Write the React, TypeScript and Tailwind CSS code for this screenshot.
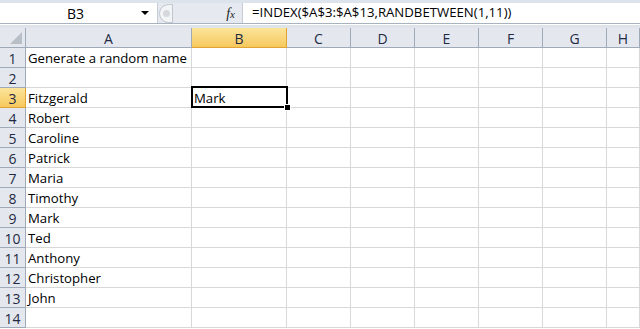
const cols = ["A", "B", "C", "D", "E", "F", "G", "H"];
const names = [
  "Fitzgerald",
  "Robert",
  "Caroline",
  "Patrick",
  "Maria",
  "Timothy",
  "Mark",
  "Ted",
  "Anthony",
  "Christopher",
  "John",
];

const cellValue = (row: number, col: number): string => {
  if (col === 0 && row === 1) return "Generate a random name";
  if (col === 0 && row >= 3 && row <= 13) return names[row - 3];
  if (col === 1 && row === 3) return "Mark";
  return "";
};

export default function App() {
  const rows = [];
  for (let i = 1; i <= 14; i++) {
    rows.push(i);
  }

  return (
    <div
      className="w-[640px] h-[329px] overflow-hidden bg-white text-[13.2px] text-black"
      style={{ fontFamily: '"Open Sans", "Liberation Sans", sans-serif' }}
    >
      <div className="h-[3px] bg-[#dde3ea]" />
      {/* formula bar */}
      <div className="h-[21px] flex border-b border-[#a9b3bf]">
        <div className="w-[158px] flex items-center bg-white border-r border-[#c5ccd5]">
          <div className="flex-1 text-center pl-[10px] text-[14px]">B3</div>
          <div className="mr-[8px] w-0 h-0 border-l-[4px] border-r-[4px] border-t-[4px] border-l-transparent border-r-transparent border-t-black" />
        </div>
        <div className="w-[85px] flex items-center bg-[#e6eaf0] border-r border-[#c5ccd5]">
          <div className="ml-[1px] w-[14px] h-[19px] rounded-l-full bg-[#f3f4f6] border border-[#c0c6ce] flex items-center justify-center">
            <div className="w-[7px] h-[7px] rounded-full bg-[#d5d9de]" />
          </div>
          <div className="flex-1" />
          <span
            className="mr-[7px] italic text-[14px] text-[#222]"
            style={{ fontFamily: '"Liberation Serif", serif' }}
          >
            f<span className="text-[11px]">x</span>
          </span>
        </div>
        <div className="flex-1 flex items-center pl-[9px] bg-white text-[13.2px]">
          =INDEX($A$3:$A$13,RANDBETWEEN(1,11))
        </div>
      </div>
      <div className="h-[4px] bg-[#dfe4ea] border-t border-white" />
      {/* sheet */}
      <div className="grid grid-cols-[26px_166px_95px_64px_64px_64px_64px_64px_1fr]">
        <div className="h-[20px] bg-[#e4e8ee] border-r border-b border-[#9eaab8] relative">
          <div className="absolute right-[3px] bottom-[3px] w-0 h-0 border-l-[12px] border-l-transparent border-b-[12px] border-b-[#b9bfc7]" />
        </div>
        {cols.map((c) => (
          <div
            key={c}
            className={
              c === "B"
                ? "h-[20px] pt-[1px] flex items-center justify-center bg-gradient-to-b from-[#fbe49a] to-[#f7c95c] border-r border-b border-[#e0a435] text-[#1f2a44] text-[14px]"
                : "h-[20px] pt-[1px] flex items-center justify-center bg-[#e4e8ee] border-r border-b border-[#9eaab8] text-[#1f2a44] text-[14px]"
            }
          >
            {c}
          </div>
        ))}
        {rows.map((r) => (
          <div key={r} className="contents">
            <div
              className={
                r === 3
                  ? "h-[20px] pt-[2px] flex items-center justify-center bg-gradient-to-b from-[#fbe49a] to-[#f7c95c] border-r border-b border-[#e0a435] text-[#1f2a44] text-[14px]"
                  : "h-[20px] pt-[2px] flex items-center justify-center bg-[#e4e8ee] border-r border-b border-[#9eaab8] text-[#1f2a44] text-[14px]"
              }
            >
              {r}
            </div>
            {cols.map((c, ci) => (
              <div
                key={c}
                className={
                  r === 3 && ci === 1
                    ? "h-[20px] pt-[2px] flex items-center pl-[2px] border-r border-b border-[#d8d8d8] whitespace-nowrap relative z-10"
                    : "h-[20px] pt-[2px] flex items-center pl-[2px] border-r border-b border-[#d8d8d8] whitespace-nowrap relative"
                }
              >
                {r === 3 && ci === 1 && (
                  <div className="absolute -left-[1px] -top-[2px] w-[97px] h-[22px] border-2 border-black">
                    <div className="absolute -right-[5px] -bottom-[5px] w-[7px] h-[7px] bg-black border border-white" />
                  </div>
                )}
                <span className="relative">{cellValue(r, ci)}</span>
              </div>
            ))}
          </div>
        ))}
      </div>
    </div>
  );
}
